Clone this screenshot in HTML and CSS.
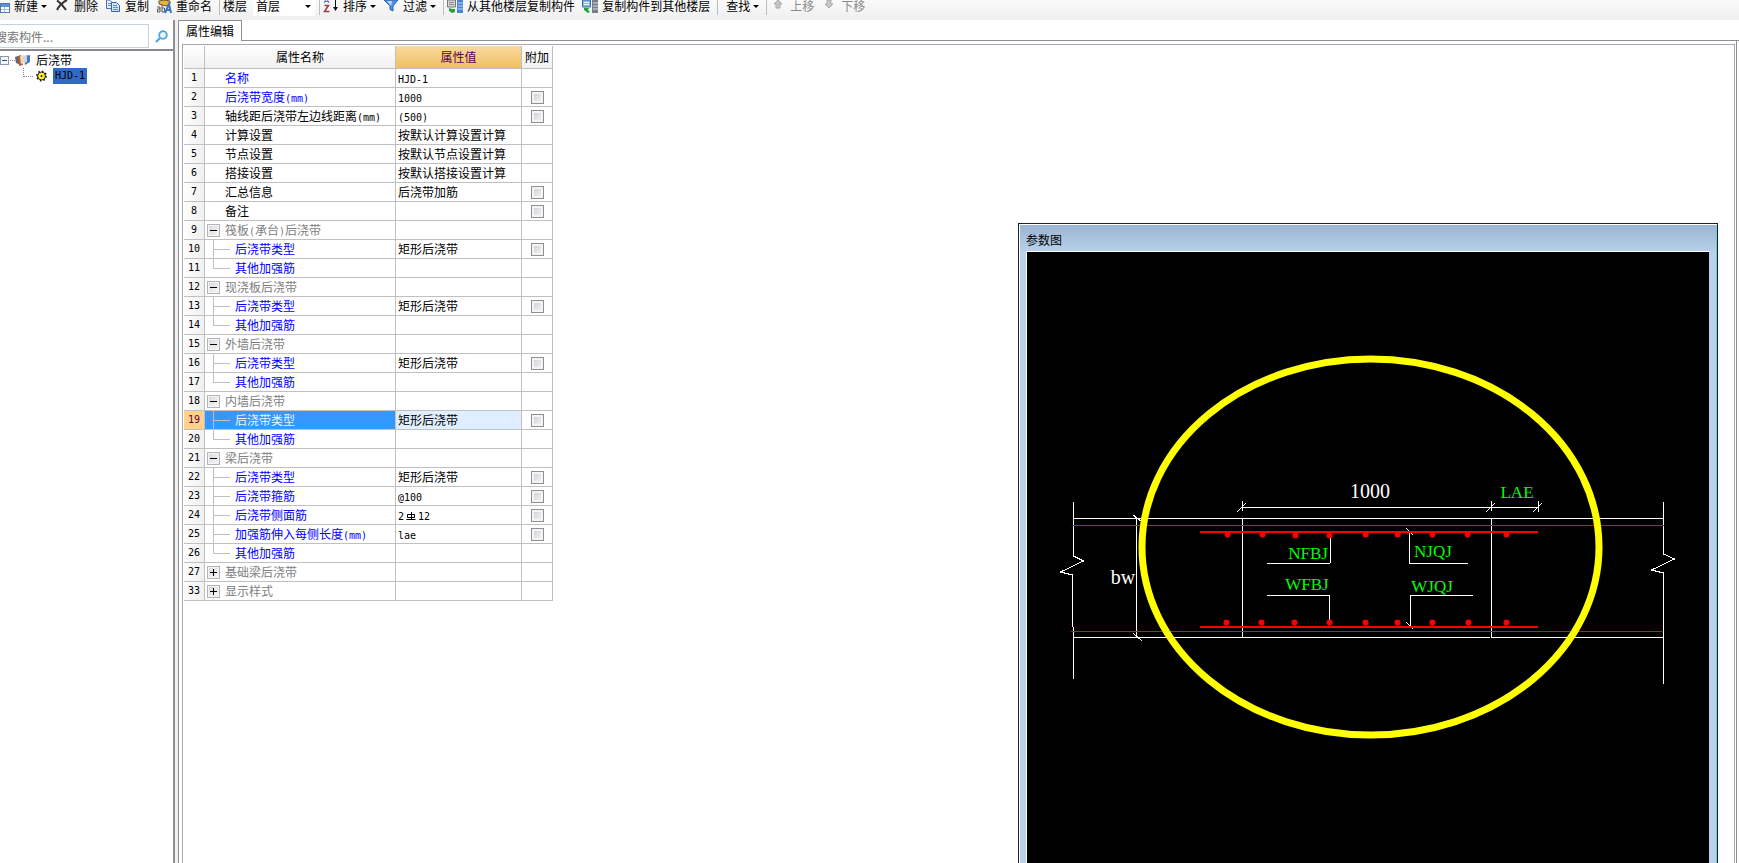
FILE: index.html
```html
<!DOCTYPE html>
<html lang="zh-CN">
<head>
<meta charset="utf-8">
<title>属性编辑</title>
<link rel="stylesheet" href="styles.css">
</head>
<body>
<div class="app">
  <header class="toolbar">
    <button class="tool first"><svg class="ico" viewBox="0 0 16 16"><path d="M2 0l2 3 3 1-3 1-2 3-1-3z" fill="#f0a818"/><rect x="6.500" y="3.500" width="9" height="9" fill="#fff" stroke="#4c78b8"/><path d="M7 4h8v3H7z" fill="#5f93d8"/><path d="M7 9.500h8M10.500 7v5" stroke="#9cc0ea"/></svg>新建<i class="caret"></i></button>
    <button class="tool"><svg class="ico" viewBox="0 0 16 16"><path d="M3 .5c3 2 6 5 9 9.500M13 0C9 2 5 6 3 10" fill="none" stroke="#333" stroke-width="2"/></svg>删除</button>
    <button class="tool"><svg class="ico" viewBox="0 0 16 16"><path d="M1.500 0v8.500h6V3l-3-3z" fill="#e8f1fc" stroke="#4a6fae"/><path d="M6.500 2.500h5l3 3v6h-8z" fill="#d4e5fb" stroke="#3a60a8"/><path d="M3 3.500h3M3 5.500h3M8 5.500h4M8 7.500h5M8 9.500h5" stroke="#5d8bd2"/></svg>复制</button>
    <button class="tool"><svg class="ico" viewBox="0 0 16 16"><path d="M3 4V1l5-1 6 1v3l-4 2z" fill="#e9b43b" stroke="#6d5422"/><path d="M1 7h3v5H1.500v-3H4M6 5v7h2.500V8H6" fill="none" stroke="#555"/><path d="M9 13l4-9 2 9M10 10h5" fill="none" stroke="#3d74c7" stroke-width="2"/></svg>重命名</button>
    <i class="sep"></i>
    <label class="floor">楼层<span class="combo"><select><option>首层</option></select><i class="caret"></i></span></label>
    <i class="sep"></i>
    <button class="tool"><svg class="ico" viewBox="0 0 16 16"><path d="M1 3l2-4h1l2 4M2 1.500h4" fill="none" stroke="#5573ad"/><path d="M1.500 5.500h4l-4 6h5" fill="none" stroke="#a03c48" stroke-width="1.500"/><path d="M12.500 0v9" stroke="#111"/><path d="M10 7h5l-2.500 4z" fill="#111"/></svg>排序<i class="caret"></i></button>
    <button class="tool"><svg class="ico" viewBox="0 0 16 16"><path d="M1 0h14l-5 6v5l-3-1.500V6z" fill="#4f8fe6" stroke="#2f62b5"/><path d="M4 1h5L8 6z" fill="#b8dbff"/></svg>过滤<i class="caret"></i></button>
    <i class="sep"></i>
    <button class="tool"><svg class="ico" viewBox="0 0 16 16"><path d="M.5 0h8v7h-8z" fill="#d7d7d7" stroke="#777"/><path d="M2 2.500h5M2 4.500h5" stroke="#888"/><path d="M10 0h6v13h-6z" fill="#4a83cf"/><path d="M11 3h5M11 6h5M11 9h5" stroke="#b9d8ff"/><path d="M2 8l3 1 3 0 0 3-3 1-3-2z" fill="#1fa63a"/></svg>从其他楼层复制构件</button>
    <button class="tool"><svg class="ico" viewBox="0 0 16 16"><path d="M.5 0h8v7h-8z" fill="#8bb6ec" stroke="#376cb5"/><path d="M2 2.500h5M2 4.500h5" stroke="#edf5ff"/><path d="M10 0h6v13h-6z" fill="#777e88"/><path d="M11 3h5M11 6h5M11 9h5" stroke="#ddd"/><path d="M2 8h5l-1 2 2 2-2 1-4-3z" fill="#1fa63a"/></svg>复制构件到其他楼层</button>
    <i class="sep"></i>
    <button class="tool search-tool">查找<i class="caret"></i></button>
    <i class="sep"></i>
    <button class="tool" disabled><svg class="ico" viewBox="0 0 16 16"><path d="M8 0l4 4h-2v4H6V4H4z" fill="#c6c6c6" stroke="#aaa"/></svg>上移</button>
    <button class="tool" disabled><svg class="ico" viewBox="0 0 16 16"><path d="M8 8l4-4h-2V0H6v4H4z" fill="#c6c6c6" stroke="#aaa"/></svg>下移</button>
  </header>
  <div class="body">
    <aside class="side">
      <div class="search">
        <input type="text" placeholder="搜索构件..." aria-label="搜索构件">
        <button class="find" aria-label="搜索"><svg viewBox="0 0 13 13"><circle cx="8" cy="5" r="3.800" fill="#eaf6ff" stroke="#4da3e0" stroke-width="1.800"/><path d="M5 8l-4 4" stroke="#4da3e0" stroke-width="2.200"/></svg></button>
      </div>
      <ul class="tree">
        <li><svg class="root-ico" viewBox="0 0 31 15"><rect x=".5" y="3.500" width="8" height="8" fill="#f3f6fb" stroke="#8b99ad"/><path d="M2 7.500h5" stroke="#234f9b"/><path d="M10 7.500h5" stroke="#888" stroke-dasharray="1 1"/><path d="M15 4l6-2v10l-5-2z" fill="#5d6675"/><path d="M18 3l5 1v8l-4 1z" fill="#b5622e"/><path d="M20 3l4-1v8l-3 1z" fill="#f3d5bd"/><path d="M24 3l6-1v7l-5 3z" fill="#4c79b4"/><path d="M24 3l3 0v6l-3 1z" fill="#c3d8ef"/></svg><span>后浇带</span></li>
        <li class="leaf"><svg class="leaf-ico" viewBox="0 0 26 16"><path d="M1.500 0v9M2 8.500h10" fill="none" stroke="#888" stroke-dasharray="1 1"/><circle cx="19.500" cy="8" r="4" fill="#ffef2d" stroke="#222"/><circle cx="19.500" cy="8" r="4.500" fill="none" stroke="#222" stroke-width="2" stroke-dasharray="1.500 2"/><circle cx="19.500" cy="8" r="1" fill="#222"/></svg><span class="picked lat">HJD-1</span></li>
      </ul>
    </aside>
    <main class="main">
      <div class="tabs"><button class="tab">属性编辑</button><i class="tabline"></i></div>
      <div class="pane"><div class="sheet">
        <table class="grid">
          <colgroup><col class="c-no"><col class="c-name"><col class="c-val"><col class="c-add"></colgroup>
          <thead><tr><th></th><th>属性名称</th><th class="hot">属性值</th><th>附加</th></tr></thead>
          <tbody>
            <tr><th>1</th><td class="name key">名称</td><td><span class="lat">HJD-1</span></td><td></td></tr>
            <tr><th>2</th><td class="name key">后浇带宽度<span class="lat">(mm)</span></td><td><span class="lat">1000</span></td><td><input type="checkbox" aria-label="附加 2"></td></tr>
            <tr><th>3</th><td class="name">轴线距后浇带左边线距离<span class="lat">(mm)</span></td><td><span class="lat">(500)</span></td><td><input type="checkbox" aria-label="附加 3"></td></tr>
            <tr><th>4</th><td class="name">计算设置</td><td>按默认计算设置计算</td><td></td></tr>
            <tr><th>5</th><td class="name">节点设置</td><td>按默认节点设置计算</td><td></td></tr>
            <tr><th>6</th><td class="name">搭接设置</td><td>按默认搭接设置计算</td><td></td></tr>
            <tr><th>7</th><td class="name">汇总信息</td><td>后浇带加筋</td><td><input type="checkbox" aria-label="附加 7"></td></tr>
            <tr><th>8</th><td class="name">备注</td><td></td><td><input type="checkbox" aria-label="附加 8"></td></tr>
            <tr><th>9</th><td class="name group"><button class="fold" aria-label="折叠"></button>筏板<span class="lat">(</span>承台<span class="lat">)</span>后浇带</td><td></td><td></td></tr>
            <tr><th>10</th><td class="name key sub">后浇带类型</td><td>矩形后浇带</td><td><input type="checkbox" aria-label="附加 10"></td></tr>
            <tr><th>11</th><td class="name key sub last">其他加强筋</td><td></td><td></td></tr>
            <tr><th>12</th><td class="name group"><button class="fold" aria-label="折叠"></button>现浇板后浇带</td><td></td><td></td></tr>
            <tr><th>13</th><td class="name key sub">后浇带类型</td><td>矩形后浇带</td><td><input type="checkbox" aria-label="附加 13"></td></tr>
            <tr><th>14</th><td class="name key sub last">其他加强筋</td><td></td><td></td></tr>
            <tr><th>15</th><td class="name group"><button class="fold" aria-label="折叠"></button>外墙后浇带</td><td></td><td></td></tr>
            <tr><th>16</th><td class="name key sub">后浇带类型</td><td>矩形后浇带</td><td><input type="checkbox" aria-label="附加 16"></td></tr>
            <tr><th>17</th><td class="name key sub last">其他加强筋</td><td></td><td></td></tr>
            <tr><th>18</th><td class="name group"><button class="fold" aria-label="折叠"></button>内墙后浇带</td><td></td><td></td></tr>
            <tr class="current"><th>19</th><td class="name key sub">后浇带类型</td><td class="val">矩形后浇带</td><td><input type="checkbox" aria-label="附加 19"></td></tr>
            <tr><th>20</th><td class="name key sub last">其他加强筋</td><td></td><td></td></tr>
            <tr><th>21</th><td class="name group"><button class="fold" aria-label="折叠"></button>梁后浇带</td><td></td><td></td></tr>
            <tr><th>22</th><td class="name key sub">后浇带类型</td><td>矩形后浇带</td><td><input type="checkbox" aria-label="附加 22"></td></tr>
            <tr><th>23</th><td class="name key sub">后浇带箍筋</td><td><span class="lat">@100</span></td><td><input type="checkbox" aria-label="附加 23"></td></tr>
            <tr><th>24</th><td class="name key sub">后浇带侧面筋</td><td><span class="lat">2<svg class="rebar" viewBox="0 0 14 9"><path d="M3.500 2.500h7v3h-7zM7.500 0v8M2.500 7.500h9" fill="none" stroke="#000"/></svg>12</span></td><td><input type="checkbox" aria-label="附加 24"></td></tr>
            <tr><th>25</th><td class="name key sub">加强筋伸入每侧长度<span class="lat">(mm)</span></td><td><span class="lat">lae</span></td><td><input type="checkbox" aria-label="附加 25"></td></tr>
            <tr><th>26</th><td class="name key sub last">其他加强筋</td><td></td><td></td></tr>
            <tr><th>27</th><td class="name group"><button class="fold closed" aria-label="展开"></button>基础梁后浇带</td><td></td><td></td></tr>
            <tr><th>33</th><td class="name group"><button class="fold closed" aria-label="展开"></button>显示样式</td><td></td><td></td></tr>
          </tbody>
        </table>
      </div></div>
    </main>
  </div>
  <section class="window">
    <h2>参数图</h2>
    <svg class="drawing" viewBox="1027 252 682 611" preserveAspectRatio="xMinYMin slice">
      <g class="white">
        <path d="M1073.500 502v54l10 5-23 11 12 3v52M1073.500 627v52M1663.500 502v52l11 5-23 11 12 3v111"/>
        <path d="M1073 518.500h591M1073 637.500h417M1492 637.500h172M1136.500 518v120M1242.500 518v120M1491.500 518v120"/>
        <path d="M1242 507.500h297M1242.500 501v10M1491.500 501v10M1538.500 501v11M1237 512l9-9M1486 512l9-9M1533 512l9-9M1133 515l8 6M1133 633l9 8"/>
        <path d="M1330.500 537v26M1267 563.500h63M1267 595.500h62.500v25M1468 563.500h-58.500v-32M1473 595.500h-62.500v31M1406 528l7 7M1406 622l7 7"/>
      </g>
      <path class="thin" d="M1073 525.500h591M1071 631.500h591"/>
      <path class="thick" d="M1200 532h338M1200 627h338"/>
      <g class="dots">
        <circle cx="1227.500" cy="534.500" r="3"/><circle cx="1262.500" cy="534.500" r="3"/><circle cx="1295.500" cy="535.500" r="3"/><circle cx="1329.500" cy="535.500" r="3"/><circle cx="1365.500" cy="534.500" r="3"/><circle cx="1397.500" cy="534.500" r="3"/><circle cx="1432.500" cy="534.500" r="3"/><circle cx="1467.500" cy="534.500" r="3"/><circle cx="1506.500" cy="534.500" r="3"/>
        <circle cx="1226.500" cy="622.500" r="3"/><circle cx="1261.500" cy="622.500" r="3"/><circle cx="1294.500" cy="622.500" r="3"/><circle cx="1329.500" cy="622.500" r="3"/><circle cx="1365.500" cy="622.500" r="3"/><circle cx="1397.500" cy="622.500" r="3"/><circle cx="1432.500" cy="622.500" r="3"/><circle cx="1468.500" cy="622.500" r="3"/><circle cx="1506.500" cy="622.500" r="3"/>
      </g>
      <g class="dim"><text x="1370" y="498">1000</text><text x="1123" y="584">bw</text></g>
      <g class="param"><text x="1517" y="498">LAE</text><text x="1308" y="559">NFBJ</text><text x="1307" y="590">WFBJ</text><text x="1433" y="557">NJQJ</text><text x="1432" y="592">WJQJ</text></g>
      <ellipse class="ring" cx="1370.500" cy="547" rx="228.500" ry="188"/>
    </svg>
  </section>
</div>
</body>
</html>
```
FILE: styles.css
```css
* { box-sizing: border-box; }
html, body { height: 100%; margin: 0; }
body {
  font: 12px/18px "Noto Sans CJK SC", sans-serif;
  color: #000;
  background: #fff;
  overflow: hidden;
}
button, input, select { font: inherit; color: inherit; }
button { border: 0; padding: 0; background: none; }
.lat { font-family: "DejaVu Sans Mono", monospace; font-size: 10px; line-height: 10px; }

.app { position: relative; height: 100vh; display: flex; flex-direction: column; }

/* toolbar */
.toolbar {
  height: 20px;
  flex: none;
  display: flex;
  align-items: center;
  gap: 7px;
  padding-bottom: 8px;
  background: linear-gradient(#fafafa, #efefef);
  line-height: 12px;
  white-space: nowrap;
}
.tool { display: flex; align-items: center; gap: 4px; flex: none; height: 12px; }
.tool.first { margin-left: -6px; }
.tool:disabled { color: #8a8a8a; }
.ico { width: 16px; height: 16px; flex: none; margin-top: 4px; }
.caret {
  margin-left: -1px;
  border: 3px solid transparent;
  border-top-color: #000;
  border-bottom: 0;
}
.sep { width: 1px; height: 18px; background: #bdbdbd; margin-right: -4px; flex: none; }
.search-tool { margin-left: 5px; }
.floor { display: flex; align-items: center; gap: 6px; margin-right: -3px; }
.combo {
  display: flex;
  align-items: center;
  width: 62px;
  height: 20px;
  padding: 0 4px 0 3px;
  background: #fff;
}
.combo select { appearance: none; border: 0; background: none; padding: 0; flex: 1; min-width: 0; height: 12px; }

.body { flex: 1; display: flex; min-height: 0; background: #f0f0f0; }

/* left tree */
.side {
  width: 175px;
  flex: none;
  display: flex;
  flex-direction: column;
  background: #fff;
  padding-top: 4px;
  border-right: 2px solid #8e9094;
}
.search { display: flex; align-items: center; height: 27px; padding-bottom: 3px; border-bottom: 2px solid #85888f; }
.search input {
  width: 149px;
  height: 24px;
  margin-top: 2px;
  padding: 0;
  border: 1px solid #c5d3df;
  border-left: 0;
  text-indent: -5px;
  outline: 0;
}
.search input::placeholder { color: #777; opacity: 1; }
.find { width: 13px; height: 13px; margin: 3px 0 0 6px; }
.find svg { display: block; }
.tree { list-style: none; margin: 0; padding: 1px 0 0; }
.tree li { display: flex; align-items: center; height: 16px; }
.root-ico { width: 31px; height: 15px; margin-right: 5px; }
.leaf { padding-left: 22px; }
.leaf-ico { width: 26px; height: 16px; margin-right: 5px; }
.picked { background: #316ac5; padding: 0 2px; line-height: 16px; }

/* property pane */
.main { flex: 1; display: flex; flex-direction: column; margin-left: 3px; background: #fff; }
.tabs { display: flex; height: 21px; flex: none; }
.tab {
  width: 64px;
  border: 1px solid #8c8e98;
  border-bottom: 0;
  background: #fff;
  line-height: 18px;
}
.tabline { flex: 1; border-bottom: 1px solid #8c8e98; }
.pane {
  flex: 1;
  min-height: 0;
  padding: 3px 1px 0 3px;
  border-left: 1px solid #8c8e98;
  border-right: 1px solid #8c8e98;
  margin-right: 2px;
}
.sheet { height: 100%; border: 1px solid #a5a8ad; border-bottom: 0; padding: 1px; }

.grid { table-layout: fixed; width: 369px; border-spacing: 0; }
.c-no { width: 21px; }
.c-name { width: 191px; }
.c-val { width: 126px; }
.c-add { width: 31px; }
.grid th, .grid td {
  height: 19px;
  padding: 0 0 0 2px;
  border: solid #c0c0c0;
  border-width: 0 1px 1px 0;
  line-height: 18px;
  text-align: left;
  font-weight: normal;
  white-space: nowrap;
}
.grid th {
  padding: 0;
  text-align: center;
  background: linear-gradient(100deg, #fff, #efefef);
}
.grid tbody th { font-family: "DejaVu Sans Mono", monospace; font-size: 10px; }
.grid thead th { height: 23px; background: linear-gradient(#fff, #f0f0f0); }
.grid thead .hot { background: linear-gradient(#f9d99f, #f1c15f); color: #5a0050; }
.grid .name { position: relative; padding-left: 20px; }
.grid .sub { padding-left: 30px; }
.key { color: #00f; }
.group { color: #808080; }
.grid td:last-child { padding: 0; text-align: center; }
.grid input {
  appearance: none;
  display: block;
  width: 13px;
  height: 13px;
  margin: 0 auto;
  border: 1px solid #8e8f8f;
  background: linear-gradient(135deg, #c9ced6, #f6f6f6);
  box-shadow: inset 0 0 0 2px #f4f4f4;
}
.grid .current th { background: #ffd28c; color: #5a0050; }
.grid .current .name { background: #39f; color: #e8f4ff; }
.current .val { background: #dfefff; }

/* outline lines and fold boxes lie over the name cell */
.sub::before, .sub::after { content: ""; position: absolute; left: 8px; background: #c0c0c0; }
.sub::before { top: 0; width: 1px; height: 19px; }
.sub::after { top: 9px; width: 17px; height: 1px; }
.last::before { height: 10px; }
.fold {
  position: absolute;
  left: 2px;
  top: 3px;
  width: 13px;
  height: 13px;
  border: 1px solid #b4b4b4;
  background: linear-gradient(135deg, #d3d8df, #f8f8f8);
  box-shadow: inset 0 0 0 1px #f4f4f4;
}
.fold::before, .fold.closed::after { content: ""; position: absolute; left: 2px; top: 5px; width: 7px; height: 1px; background: #000; }
.fold.closed::after { left: 5px; top: 2px; width: 1px; height: 7px; }
.rebar { width: 14px; height: 9px; vertical-align: -1px; }

/* floating parameter window */
.window {
  position: absolute;
  left: 1018px;
  right: 21px;
  top: 223px;
  bottom: 0;
  display: flex;
  flex-direction: column;
  padding: 0 8px 0 7px;
  border: 1px solid #222;
  border-bottom: 0;
  background: linear-gradient(#99b4d1, #b9d1ea 28px);
  box-shadow: inset 1px 1px #fff, inset -1px 0 #5fd0f0;
}
.window h2 { margin: 0; padding: 7px 0 2px; font-size: 12px; line-height: 18px; font-weight: normal; }
.drawing {
  flex: 1;
  min-height: 0;
  width: 100%;
  background: #000;
  border: solid #fff;
  border-width: 1px 0 0 1px;
}
.white { fill: none; stroke: #fff; shape-rendering: crispEdges; }
.thin { fill: none; stroke: #f00; shape-rendering: crispEdges; }
.thick { fill: none; stroke: #f00; stroke-width: 2px; }
.dots { fill: #f00; }
.dim, .param { font-family: "Liberation Serif", serif; text-anchor: middle; }
.dim { font-size: 20px; fill: #fff; }
.param { font-size: 17px; fill: #0f0; }
.ring { fill: none; stroke: #ff0; stroke-width: 7px; }
```
